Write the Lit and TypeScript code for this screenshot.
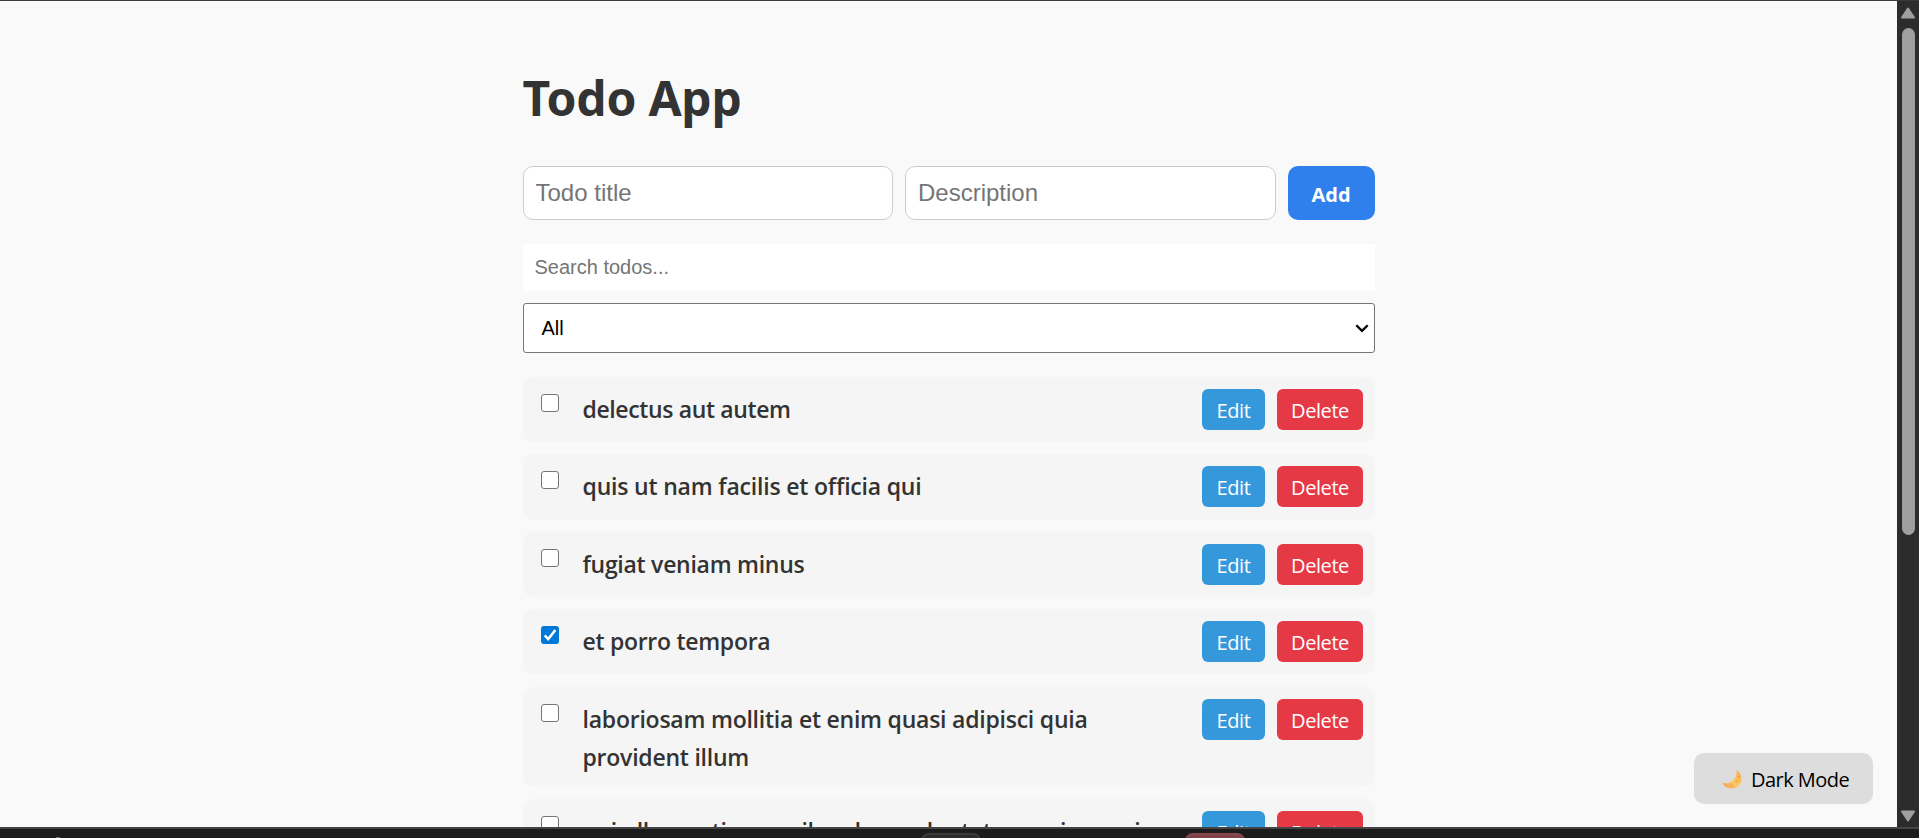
import { LitElement, html, css } from "lit";
import { customElement, property, state } from "lit/decorators.js";

interface Todo {
  title: string;
  done: boolean;
  tracking: number;
}

@customElement("todo-item")
class TodoItem extends LitElement {
  @property({ attribute: false }) todo!: Todo;

  static styles = css`
    :host {
      display: flex;
      align-items: flex-start;
      box-sizing: border-box;
      min-height: 65.2px;
      padding: 12px 11.5px 12.2px 18px;
      border-radius: 10px;
      background: #f5f5f5;
    }
    .check {
      appearance: none;
      flex: none;
      display: grid;
      place-items: center;
      box-sizing: border-box;
      width: 18px;
      height: 18px;
      margin: 5px 24px 0 0;
      border: 1px solid #767676;
      border-radius: 3px;
      background: #fff;
    }
    .check.on {
      border: 0;
      background: #0078d7;
    }
    .title {
      flex: 1;
      margin: 1px 0 -1px;
      padding-right: 30px;
      color: #333;
      font-size: 23px;
      font-weight: 600;
      line-height: 38px;
    }
    .actions {
      display: flex;
      gap: 12px;
    }
    .btn {
      height: 41px;
      padding: 2px 0 0;
      border: 0;
      border-radius: 6px;
      color: #fff;
      font: 400 20px "Open Sans", "Noto Sans", sans-serif;
      letter-spacing: -0.42px;
    }
    .edit {
      width: 63px;
      background: #3498db;
    }
    .delete {
      width: 86px;
      background: #e63946;
    }
  `;

  render() {
    const { title, done, tracking } = this.todo;
    return html`
      <span class="check ${done ? "on" : ""}" role="checkbox" aria-checked=${done}>
        ${done
          ? html`<svg width="18" height="18" viewBox="0 0 18 18">
              <path d="M3.7 9.4 7.2 13 14.3 4.1" fill="none" stroke="#fff" stroke-width="2.5" />
            </svg>`
          : ""}
      </span>
      <span class="title" style="letter-spacing:${tracking}px">${title}</span>
      <div class="actions">
        <button class="btn edit">Edit</button>
        <button class="btn delete">Delete</button>
      </div>
    `;
  }
}

@customElement("app-root")
class AppRoot extends LitElement {
  @state() private todos: Todo[] = [
    { title: "delectus aut autem", done: false, tracking: -0.37 },
    { title: "quis ut nam facilis et officia qui", done: false, tracking: -0.19 },
    { title: "fugiat veniam minus", done: false, tracking: -0.27 },
    { title: "et porro tempora", done: true, tracking: -0.29 },
    { title: "laboriosam mollitia et enim quasi adipisci quia provident illum", done: false, tracking: -0.23 },
    { title: "qui ullam ratione quibusdam voluptatem quia omnis", done: false, tracking: -0.33 },
  ];

  static styles = css`
    :host {
      display: flex;
      flex-direction: column;
      height: 838px;
      overflow: hidden;
      font-family: "Open Sans", "Noto Sans", sans-serif;
    }
    .topline {
      flex: none;
      height: 1px;
      background: #3a3a3a;
    }
    .window {
      display: flex;
      height: 826px;
      flex: none;
      overflow: hidden;
    }
    .page {
      position: relative;
      flex: 1;
      overflow: hidden;
      background: #f9f9f9;
    }
    .container {
      width: 852px;
      margin: 0 auto;
      padding-top: 63px;
    }
    h1 {
      margin: 0 0 34px;
      height: 68px;
      color: #333;
      font: 700 48px/68px "Noto Sans", sans-serif;
      letter-spacing: -0.25px;
    }
    .form {
      display: flex;
      gap: 12px;
      height: 54px;
    }
    input {
      box-sizing: border-box;
      min-width: 0;
      outline: 0;
      background: #fff;
      font-family: "Liberation Sans", Arial, sans-serif;
    }
    input::placeholder {
      color: #757575;
    }
    .field {
      flex: 1;
      padding: 0 12px;
      border: 1px solid #ccc;
      border-radius: 10px;
      font-size: 24px;
    }
    .add {
      width: 87px;
      padding: 3px 0 0;
      border: 0;
      border-radius: 10px;
      background: #2f80ed;
      color: #fff;
      font: 700 20px "Open Sans", "Noto Sans", sans-serif;
      letter-spacing: 0;
    }
    .search {
      display: block;
      width: 100%;
      height: 47px;
      margin: 24px 0 12px;
      padding: 0 12px;
      border: 0;
      font-size: 20px;
    }
    .filter {
      display: flex;
      align-items: center;
      justify-content: space-between;
      box-sizing: border-box;
      height: 50px;
      padding: 0 4px 0 18px;
      border: 1px solid #767676;
      border-radius: 3px;
      background: #fff;
      color: #000;
      font: 20px "Liberation Sans", Arial, sans-serif;
    }
    .list {
      display: flex;
      flex-direction: column;
      gap: 12.2px;
      margin-top: 24px;
    }
    .mode {
      position: absolute;
      right: 24px;
      bottom: 23px;
      display: flex;
      align-items: center;
      width: 179px;
      height: 51px;
      padding: 0 0 0 27px;
      border: 0;
      border-radius: 10px;
      background: #ddd;
      color: #000;
      font: 400 20px "Open Sans", "Noto Sans", sans-serif;
      letter-spacing: -0.53px;
    }
    .mode span {
      padding: 2px 0 0 8px;
    }
    .scrollbar {
      display: flex;
      flex-direction: column;
      align-items: center;
      box-sizing: border-box;
      width: 22px;
      padding: 6px 0 5px;
      background: #2c2c2c;
    }
    .thumb {
      width: 13px;
      height: 507px;
      margin: 9px 0 auto;
      border-radius: 7px;
      background: #9f9f9f;
    }
    .taskbar {
      flex: none;
      display: flex;
      box-sizing: border-box;
      height: 11px;
      border-top: 2px solid #444;
      background: #1c1c1c;
    }
    .speck {
      width: 4px;
      height: 1px;
      margin: 8px 0 0 56px;
      background: #777;
    }
    .tab {
      box-sizing: border-box;
      width: 60px;
      height: 20px;
      margin: 4px 0 0 861px;
      border: 2px solid #3a3a3a;
      border-radius: 8px;
      background: #2a2a2a;
    }
    .tab.red {
      margin-left: 204px;
      border-color: #8a484d;
      background: #7c4448;
    }
  `;

  render() {
    return html`
      <div class="topline"></div>
      <div class="window">
        <div class="page">
          <div class="container">
            <h1>Todo App</h1>
            <div class="form">
              <input class="field" placeholder="Todo title" />
              <input class="field" placeholder="Description" />
              <button class="add">Add</button>
            </div>
            <input class="search" placeholder="Search todos..." />
            <div class="filter" role="combobox">
              <span>All</span>
              <svg width="16" height="12" viewBox="0 0 16 12">
                <path d="M2.3 3.2 8 8.9 13.7 3.2" fill="none" stroke="#000" stroke-width="2.3" />
              </svg>
            </div>
            <div class="list">
              ${this.todos.map((t) => html`<todo-item .todo=${t}></todo-item>`)}
            </div>
          </div>
          <button class="mode">
            <svg width="22" height="22" viewBox="0 0 22 22">
              <defs>
                <linearGradient id="moon" x1="0" y1="1" x2="1" y2="0">
                  <stop offset="0" stop-color="#f59a52" />
                  <stop offset=".5" stop-color="#ffc964" />
                  <stop offset="1" stop-color="#f8a24e" />
                </linearGradient>
              </defs>
              <path d="M15.500 2C21.500 6 22 14 17.500 18 12.500 22.200 4 21 1 14.500 4 16 8.500 15.500 11.500 12.500 15 9.500 16.200 5.500 15.500 2Z" fill="url(#moon)" />
              <circle cx="15.500" cy="13.500" r="1.300" fill="#f0a94c" />
              <circle cx="11" cy="17" r="1" fill="#f0a94c" />
              <circle cx="17.800" cy="8.500" r=".9" fill="#ec9a4b" />
            </svg>
            <span>Dark Mode</span>
          </button>
        </div>
        <div class="scrollbar">
          <svg width="16" height="12" viewBox="0 0 16 12">
            <path d="M8 1.500 14 10.500H2Z" fill="#9f9f9f" stroke="#9f9f9f" stroke-width="2" stroke-linejoin="round" />
          </svg>
          <div class="thumb"></div>
          <svg width="16" height="12" viewBox="0 0 16 12">
            <path d="M8 10.500 14 1.500H2Z" fill="#9f9f9f" stroke="#9f9f9f" stroke-width="2" stroke-linejoin="round" />
          </svg>
        </div>
      </div>
      <div class="taskbar">
        <div class="speck"></div>
        <div class="tab"></div>
        <div class="tab red"></div>
      </div>
    `;
  }
}
